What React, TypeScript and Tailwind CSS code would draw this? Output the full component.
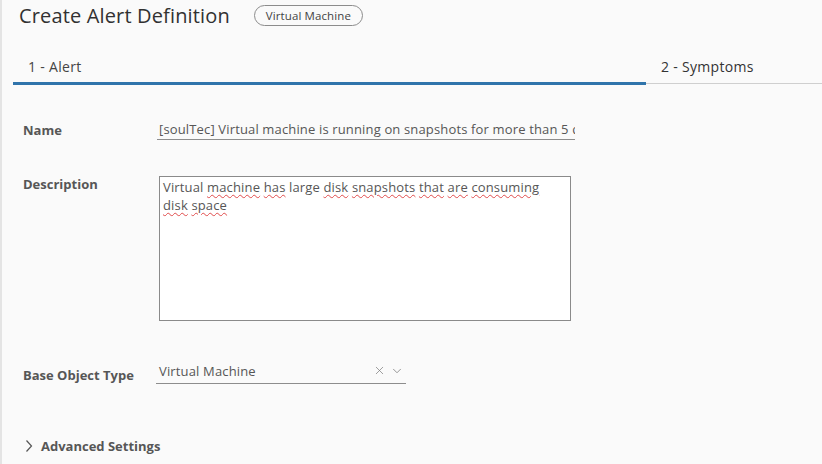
import { ChevronDown, X } from "lucide-react";

const Field = ({ label, children, className = "", labelClass = "" }: { label: string; children: React.ReactNode; className?: string; labelClass?: string }) => (
  <div className={`flex ${className}`}>
    <div className={`w-[134px] shrink-0 text-[13px] font-bold text-[#565656] ${labelClass}`}>{label}</div>
    {children}
  </div>
);

const Squiggle = ({ children }: { children: React.ReactNode }) => (
  <span className="underline decoration-wavy decoration-[#e04b4b] decoration-1 underline-offset-2">{children}</span>
);

const App = () => {
  return (
    <div
      className="w-[822px] h-[464px] overflow-hidden bg-[#fafafa] border-l-2 border-[#e4e4e4] text-[#333]"
      style={{ fontFamily: "'Open Sans', Lato, sans-serif" }}
    >
      {/* Header */}
      <div className="flex items-center pl-[17px] h-[31px]">
        <h1 className="text-[20px] tracking-[0.15px] text-[#313131] leading-none">Create Alert Definition</h1>
        <span className="ml-[24px] rounded-full border border-[#8c8c8c] px-[11px] h-[21px] flex items-center text-[11.5px] tracking-[0.1px] text-[#444]">
          Virtual Machine
        </span>
      </div>

      {/* Wizard steps */}
      <div className="flex mt-[25px] ml-[11px]">
        <div className="w-[633px] h-[29px] border-b-[3px] border-[#3074ab] pl-[15px] text-[14px] tracking-[0.3px] text-[#444]">
          1 - Alert
        </div>
        <div className="flex-1 h-[28px] border-b border-[#cfcfcf] pl-[15px] text-[14px] tracking-[0.3px] text-[#333]">
          2 - Symptoms
        </div>
      </div>

      <div className="pl-[21px]">
        <Field label="Name" className="mt-[35px] items-center" labelClass="pt-[1px]">
          <div className="w-[418px] h-[19px] border-b border-[#8d8d8d] pl-[2px] text-[13px] tracking-[0.15px] text-[#565656] whitespace-nowrap overflow-hidden leading-[17px]">
            [soulTec] Virtual machine is running on snapshots for more than 5 days
          </div>
        </Field>

        <Field label="Description" className="mt-[34px]">
          <div className="mt-[1px] ml-[2px] w-[412px] h-[145px] border border-[#8a8a8a] bg-white px-[3px] pt-[1px] text-[13px] tracking-[0.15px] leading-[18px] text-[#565656]">
            Virtual <Squiggle>machine</Squiggle> <Squiggle>has</Squiggle> large <Squiggle>disk</Squiggle>{" "}
            <Squiggle>snapshots</Squiggle> <Squiggle>that</Squiggle> <Squiggle>are</Squiggle> <Squiggle>consuming</Squiggle>
            <br />
            <Squiggle>disk</Squiggle> <Squiggle>space</Squiggle>
          </div>
        </Field>

        <Field label="Base Object Type" className="mt-[42px] items-end">
          <div className="-ml-[1px] mb-[2px] w-[250px] h-[21px] border-b border-[#8d8d8d] flex items-start pl-[3px] text-[13px] tracking-[0.15px] text-[#565656] leading-[16px]">
            <span className="flex-1">Virtual Machine</span>
            <X size={13} strokeWidth={1.3} className="mt-[1px] text-[#777]" />
            <ChevronDown size={14} strokeWidth={1.3} className="ml-[4px] mr-[2px] mt-[1px] text-[#777]" />
          </div>
        </Field>

        {/* Collapsible section */}
        <div className="flex items-center mt-[51px] ml-[2px]">
          <svg width="8" height="14" viewBox="0 0 8 14" fill="none" stroke="#555" strokeWidth="1.2">
            <path d="M1.5 1.5 L6.5 7 L1.5 12.5" />
          </svg>
          <span className="ml-[8px] text-[13px] font-bold text-[#565656]">Advanced Settings</span>
        </div>
      </div>
    </div>
  );
};

export default App;
